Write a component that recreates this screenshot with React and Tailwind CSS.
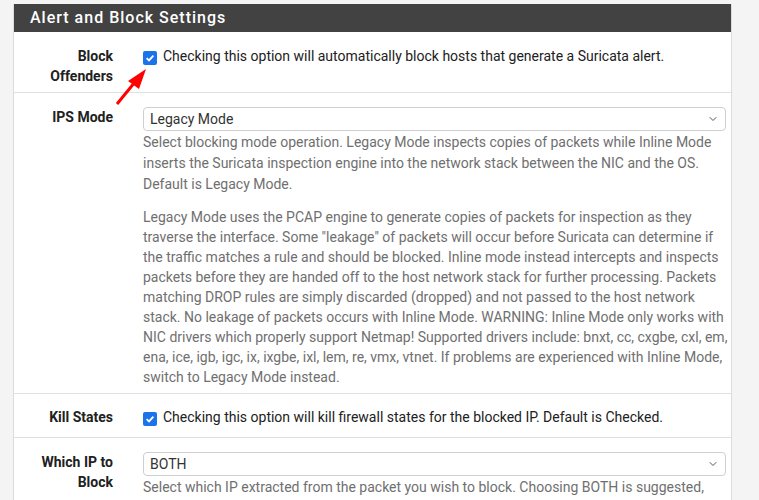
import { ChevronDown } from "lucide-react";

function Label({ children }) {
  return (
    <div className="w-[114px] shrink-0 pr-[15px] text-right text-[14px] font-bold leading-[20px] text-[#212121]">
      {children}
    </div>
  );
}

function Select({ value }) {
  return (
    <div className="flex h-[24px] items-center justify-between rounded-[4px] border border-[#cfcfcf] bg-white pl-[6px] pr-[6px] text-[14px] text-[#333]">
      <span>{value}</span>
      <ChevronDown size={12} strokeWidth={2} className="text-[#555]" />
    </div>
  );
}

function Check({ children }) {
  return (
    <div className="flex items-start gap-[6px] text-[14px] leading-[20px] text-[#212121]">
      <span className="mt-[5px] flex h-[14px] w-[14px] shrink-0 items-center justify-center rounded-[2px] bg-[#1a73e8]">
        <svg width="10" height="10" viewBox="0 0 10 10">
          <path d="M1.6 5.2 L4 7.4 L8.4 2.6" fill="none" stroke="white" strokeWidth="1.8" />
        </svg>
      </span>
      <span>{children}</span>
    </div>
  );
}

export default function App() {
  return (
    <div className="h-[500px] w-full overflow-hidden bg-[#f4f4f4] pl-[13px] pr-[27px] pt-[4px]" style={{ fontFamily: "Roboto, 'Liberation Sans', sans-serif" }}>
      <div className="relative border-x border-[#dcdcdc] bg-white">
        <div className="flex h-[28px] items-center bg-[#424242] pl-[16px] text-[16px] font-medium tracking-[1px] text-white">
          Alert and Block Settings
        </div>

        <div className="flex border-b border-[#e0e0e0] pt-[14px] pb-[6px]">
          <Label>Block Offenders</Label>
          <div className="flex-1 pl-[15px] pr-[5px]">
            <Check>Checking this option will automatically block hosts that generate a Suricata alert.</Check>
          </div>
        </div>

        <div className="flex border-b border-[#e0e0e0] pt-[14px] pb-[6px]">
          <Label>IPS Mode</Label>
          <div className="flex-1 pl-[15px] pr-[5px]">
            <Select value="Legacy Mode" />
            <div className="mr-[-6px] mt-[1px] text-[14px] leading-[21px] text-[#6f6f6f]">
              <p>
                Select blocking mode operation. Legacy Mode inspects copies of packets while Inline Mode inserts the Suricata inspection engine into the network stack between the NIC and the OS. Default is Legacy Mode.
              </p>
              <p className="mt-[12px] leading-[20px]">
                Legacy Mode uses the PCAP engine to generate copies of packets for inspection as they traverse the interface. Some "leakage" of packets will occur before Suricata can determine if the traffic matches a rule and should be blocked. Inline mode instead intercepts and inspects packets before they are handed off to the host network stack for further processing. Packets matching DROP rules are simply discarded (dropped) and not passed to the host network stack. No leakage of packets occurs with Inline Mode. WARNING: Inline Mode only works with NIC drivers which properly support Netmap! Supported drivers include: bnxt, cc, cxgbe, cxl, em, ena, ice, igb, igc, ix, ixgbe, ixl, lem, re, vmx, vtnet. If problems are experienced with Inline Mode, switch to Legacy Mode instead.
              </p>
            </div>
          </div>
        </div>

        <div className="flex border-b border-[#e0e0e0] pt-[13px] pb-[10px]">
          <Label>Kill States</Label>
          <div className="flex-1 pl-[15px] pr-[5px]">
            <Check>Checking this option will kill firewall states for the blocked IP. Default is Checked.</Check>
          </div>
        </div>

        <div className="flex pt-[14px] pb-[6px]">
          <Label>Which IP to Block</Label>
          <div className="flex-1 pl-[15px] pr-[5px]">
            <Select value="BOTH" />
            <div className="mt-[1px] text-[14px] leading-[21px] text-[#6f6f6f]">
              Select which IP extracted from the packet you wish to block. Choosing BOTH is suggested, and it is the default value.
            </div>
          </div>
        </div>

        <svg className="pointer-events-none absolute left-[87px] top-[51px]" width="60" height="60" viewBox="0 0 60 60">
          <line x1="16" y1="49" x2="34" y2="27" stroke="#f00" strokeWidth="3" />
          <polygon points="45,14 27,26 38,34" fill="#f00" />
        </svg>
      </div>
    </div>
  );
}
